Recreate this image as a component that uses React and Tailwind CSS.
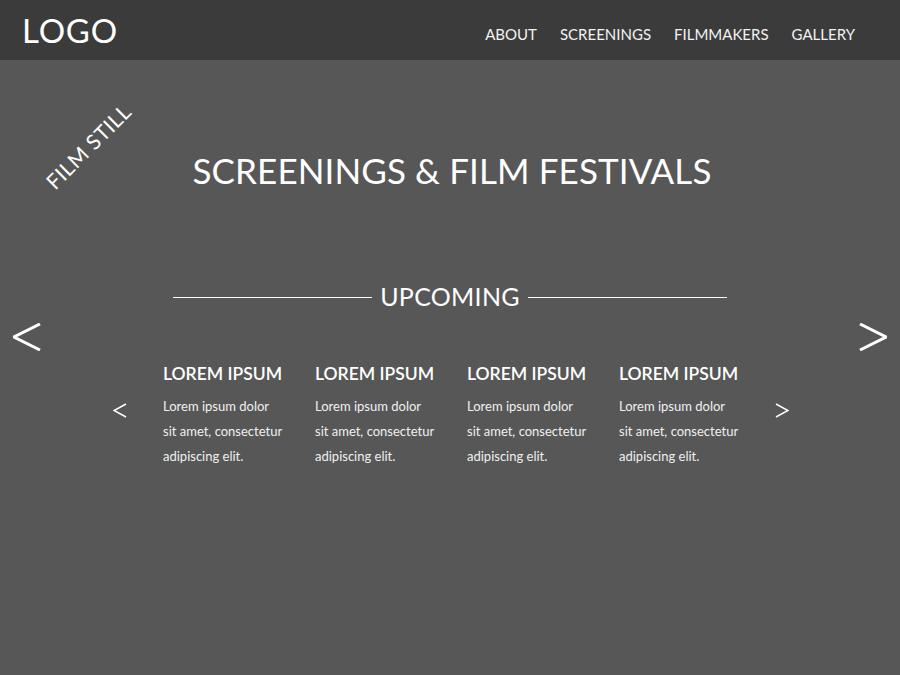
import React from 'react';

const navItems = ['ABOUT', 'SCREENINGS', 'FILMMAKERS', 'GALLERY'];

const events = [1, 2, 3, 4].map((id) => ({
    id,
    title: 'LOREM IPSUM',
    lines: ['Lorem ipsum dolor', 'sit amet, consectetur', 'adipiscing elit.'],
}));

const Chevron = ({ dir, w, h, stroke }) => (
    <svg width={w} height={h} viewBox={`0 0 ${w} ${h}`} fill="none" stroke="white" strokeWidth={stroke}>
        {dir === 'left'
            ? <polyline points={`${w - 1},1 1,${h / 2} ${w - 1},${h - 1}`} />
            : <polyline points={`1,1 ${w - 1},${h / 2} 1,${h - 1}`} />}
    </svg>
);

const App = () => {
    return (
        <div className="w-[900px] h-[675px] flex flex-col bg-[#575757] text-white font-['Lato',sans-serif] overflow-hidden">
            {/* Header */}
            <header className="h-[60px] shrink-0 bg-[#3b3b3b] flex items-center justify-between pl-[22px] pr-[45px]">
                <div className="text-[33px] leading-none tracking-[0.8px] mt-[1px]">LOGO</div>
                <nav className="flex items-center gap-[23px] text-[15px] leading-none mt-[8px]">
                    {navItems.map((item) => (
                        <a key={item} href="#" className="text-[#f2f2f2]">{item}</a>
                    ))}
                </nav>
            </header>

            <main className="relative flex-1">
                {/* film still label */}
                <div className="absolute left-[88px] top-[86px] -translate-x-1/2 -translate-y-1/2 -rotate-45 text-[21px] leading-none tracking-[0.5px] whitespace-nowrap">
                    FILM STILL
                </div>

                <h1 className="mt-[93px] text-center text-[35px] leading-none tracking-[0.1px] pl-[4px]">
                    SCREENINGS &amp; FILM FESTIVALS
                </h1>

                <section className="mt-[96px] flex items-start px-[13px]">
                    <button className="mt-[39px] shrink-0">
                        <Chevron dir="left" w={28} h={28} stroke={3} />
                    </button>

                    <div className="flex-1 flex flex-col items-center">
                        <div className="flex items-center gap-2">
                            <span className="w-[199px] h-px bg-white mt-[2px]" />
                            <h2 className="text-[25px] leading-none tracking-[0.3px]">UPCOMING</h2>
                            <span className="w-[199px] h-px bg-white mt-[2px]" />
                        </div>

                        <div className="mt-[56px] flex items-start gap-[36px] pl-[2px]">
                            <button className="mt-[38px] shrink-0">
                                <Chevron dir="left" w={14} h={15} stroke={1.5} />
                            </button>
                            <div className="flex gap-[32px]">
                                {events.map((ev) => (
                                    <div key={ev.id} className="w-[120px]">
                                        <h3 className="text-[17.5px] leading-none font-semibold whitespace-nowrap">{ev.title}</h3>
                                        <div className="mt-[11px] text-[13px] leading-[25px] text-[#f0f0f0]">
                                            {ev.lines.map((l) => (
                                                <p key={l} className="whitespace-nowrap">{l}</p>
                                            ))}
                                        </div>
                                    </div>
                                ))}
                            </div>
                            <button className="mt-[38px] shrink-0">
                                <Chevron dir="right" w={14} h={15} stroke={1.5} />
                            </button>
                        </div>
                    </div>

                    <button className="mt-[39px] shrink-0">
                        <Chevron dir="right" w={28} h={28} stroke={3} />
                    </button>
                </section>
            </main>
        </div>
    );
};

export default App;
